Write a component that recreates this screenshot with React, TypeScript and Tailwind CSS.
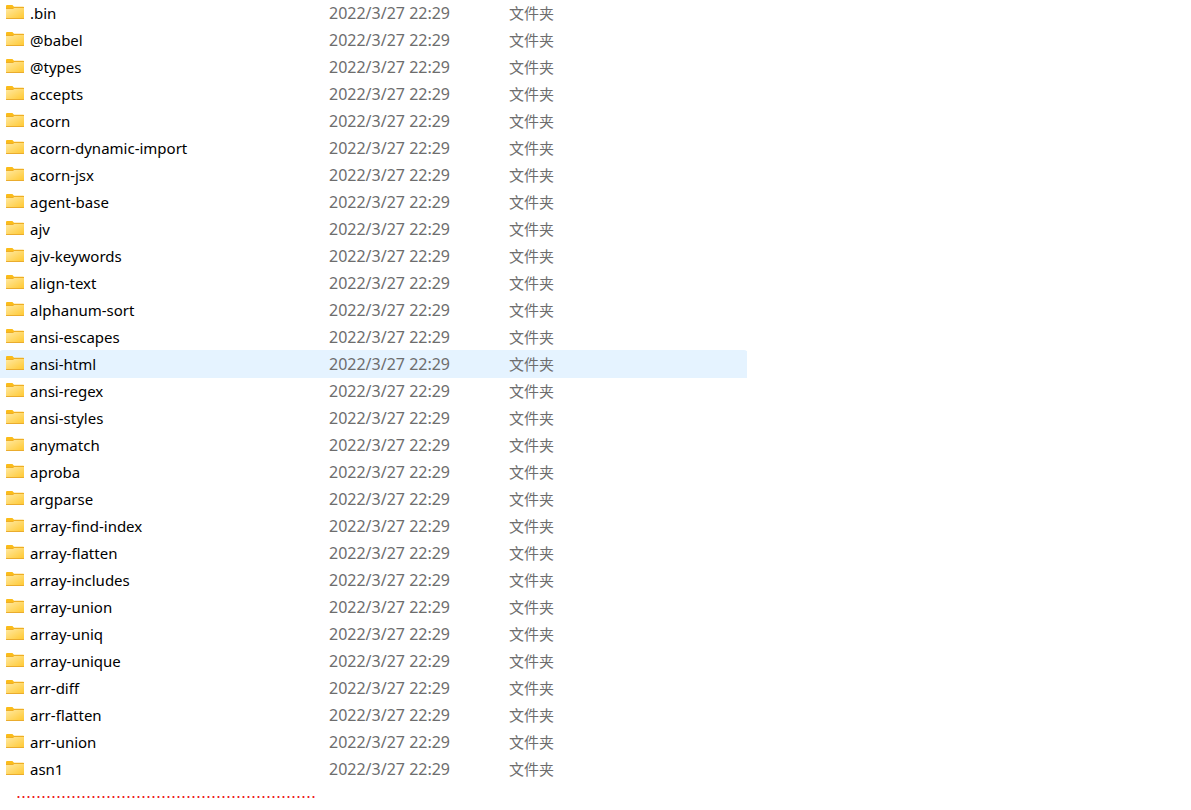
import clsx from 'clsx'

interface FolderRowProps {
  name: string
  active?: boolean
}

const folders = [
  '.bin',
  '@babel',
  '@types',
  'accepts',
  'acorn',
  'acorn-dynamic-import',
  'acorn-jsx',
  'agent-base',
  'ajv',
  'ajv-keywords',
  'align-text',
  'alphanum-sort',
  'ansi-escapes',
  'ansi-html',
  'ansi-regex',
  'ansi-styles',
  'anymatch',
  'aproba',
  'argparse',
  'array-find-index',
  'array-flatten',
  'array-includes',
  'array-union',
  'array-uniq',
  'array-unique',
  'arr-diff',
  'arr-flatten',
  'arr-union',
  'asn1',
]

const FolderIcon = () => (
  <svg className="mt-[5px] h-3.5 w-[18px] shrink-0" viewBox="0 0 18 14" aria-hidden="true">
    <path d="M0 1Q0 0 1 0H6.4L8 1.8H17.4Q18 1.8 18 2.4V6H0Z" fill="#fbbc1a" />
    <path d="M0 3H7.4L8.4 2H18V4H0Z" fill="#eeae25" />
    <path d="M0 4H7L8.2 3H18V13.2H0Z" fill="url(#folder)" />
    <path d="M0 13H18V13.5Q18 14 17.4 14H0.6Q0 14 0 13.5Z" fill="#eaac2e" />
  </svg>
)

const FolderRow = ({ name, active }: FolderRowProps) => {
  return (
    <tr
      className={clsx(
        'h-[27px]',
        active && 'rounded-[3px] bg-[#e5f3ff] shadow-[0_-1px_0_#e5f3ff]'
      )}
    >
      <td className="p-0">
        <div className="flex items-start gap-1.5 pl-1.5 text-black">
          <FolderIcon />
          <span>{name}</span>
        </div>
      </td>
      <td className="p-0 text-base leading-[27px]">2022/3/27 22:29</td>
      <td className="p-0">文件夹</td>
    </tr>
  )
}

const App = () => {
  return (
    <main className="min-h-screen overflow-hidden bg-white">
      <svg className="absolute size-0" aria-hidden="true">
        <defs>
          <linearGradient id="folder" x1="0" y1="0" x2="1" y2="1">
            <stop offset="0" stopColor="#ffe9a2" />
            <stop offset="1" stopColor="#ffc933" />
          </linearGradient>
        </defs>
      </svg>
      <table className="w-full max-w-[747px] table-fixed text-left font-['Noto_Sans','Noto_Sans_CJK_SC',sans-serif] text-[15px] leading-[27px] text-[#6d6d6d]">
        <colgroup>
          <col className="w-[329px]" />
          <col className="w-[180px]" />
          <col />
        </colgroup>
        <tbody>
          {folders.map((name) => (
            <FolderRow key={name} name={name} active={name === 'ansi-html'} />
          ))}
        </tbody>
      </table>
      <p className="pl-4 font-['Liberation_Sans',sans-serif] text-lg leading-[18px] text-[#ed1c24]">
        {'.'.repeat(60)}
      </p>
    </main>
  )
}

export default App
